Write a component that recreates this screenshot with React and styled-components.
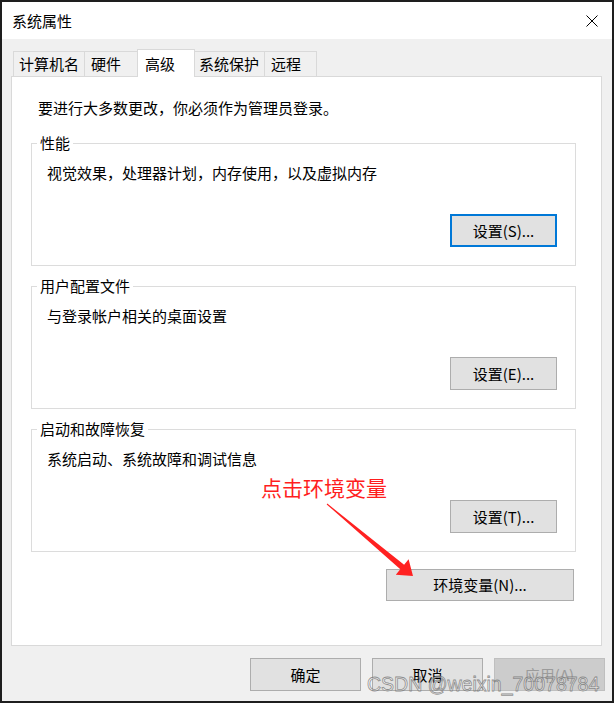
import styled, { createGlobalStyle } from "styled-components";

const GlobalStyle = createGlobalStyle`
  html, body {
    margin: 0;
    padding: 0;
    background: #ffffff;
  }
`;

const Window = styled.div`
  position: relative;
  width: 614px;
  height: 703px;
  box-sizing: border-box;
  border: 2px solid #1e1e1e;
  display: flex;
  flex-direction: column;
  background: #f0f0f0;
  font-family: "Noto Sans CJK SC", "Noto Sans", sans-serif;
  font-size: 15px;
  color: #000;
  overflow: hidden;
`;

const TitleBar = styled.div`
  height: 37px;
  flex: none;
  background: #ffffff;
  display: flex;
  align-items: center;
  justify-content: space-between;
  padding: 0 14px 0 10px;
  line-height: 20px;
`;

const Body = styled.div`
  flex: 1;
  display: flex;
  flex-direction: column;
  padding: 10px 8px 10px 9px;
`;

const TabStrip = styled.div`
  display: flex;
  align-items: flex-end;
  padding-left: 2px;
`;

const Tab = styled.div`
  position: relative;
  z-index: ${(p) => (p.$active ? 2 : 1)};
  box-sizing: border-box;
  width: ${(p) => p.$w}px;
  height: ${(p) => (p.$active ? 28 : 25)}px;
  margin-bottom: ${(p) => (p.$active ? -1 : 0)}px;
  margin-left: ${(p) => (p.$first ? 0 : -1)}px;
  padding-left: ${(p) => p.$pad}px;
  border: 1px solid #d9d9d9;
  border-bottom: none;
  background: ${(p) => (p.$active ? "#ffffff" : "#f0f0f0")};
  display: flex;
  align-items: center;
  line-height: 20px;
  white-space: nowrap;
`;

const Panel = styled.div`
  height: 570px;
  box-sizing: border-box;
  margin-right: 2px;
  border: 1px solid #d9d9d9;
  background: #ffffff;
  padding: 21px 25px 0 19px;
  display: flex;
  flex-direction: column;
`;

const Intro = styled.div`
  margin-left: 7px;
  line-height: 20px;
`;

const Group = styled.fieldset`
  margin: ${(p) => (p.$first ? 15 : 10)}px 0 0;
  border: 1px solid #dcdcdc;
  padding: 10px 18px 18px 5px;
  min-inline-size: 0;
`;

const Legend = styled.legend`
  padding: 0 3px;
  line-height: 20px;
  font-size: 15px;
`;

const Desc = styled.div`
  margin-left: 10px;
  line-height: 20px;
`;

const ButtonRow = styled.div`
  display: flex;
  justify-content: flex-end;
  margin-top: ${(p) => p.$top || 0}px;
  margin-right: ${(p) => p.$right || 0}px;
  gap: 11px;
`;

const Button = styled.button`
  box-sizing: border-box;
  width: ${(p) => p.$w || 107}px;
  height: ${(p) => p.$h || 33}px;
  padding: 0;
  background: ${(p) => (p.disabled ? "#cccccc" : "#e1e1e1")};
  border: ${(p) =>
    p.$focus ? "2px solid #0078d7" : p.disabled ? "1px solid #bfbfbf" : "1px solid #adadad"};
  color: ${(p) => (p.disabled ? "#9b9b9b" : "#000")};
  font-family: inherit;
  font-size: 15px;
  line-height: 20px;
`;

const Footer = styled(ButtonRow)`
  margin-top: 12px;
  margin-right: -1px;
`;

const Note = styled.div`
  position: absolute;
  left: 259px;
  top: 473px;
  color: #ff1e1e;
  font-size: 21px;
  line-height: 24px;
  white-space: nowrap;
`;

const Overlay = styled.svg`
  position: absolute;
  left: -2px;
  top: -2px;
  width: 614px;
  height: 703px;
  pointer-events: none;
`;

const Watermark = styled.div`
  position: absolute;
  left: 365px;
  top: 670px;
  font-family: "Liberation Sans", Arial, sans-serif;
  font-size: 19.5px;
  line-height: 24px;
  color: rgba(255, 255, 255, 0.5);
  -webkit-text-stroke: 0.8px rgba(105, 105, 105, 0.72);
  white-space: nowrap;
  pointer-events: none;
`;

const tabs = [
  { label: "计算机名", w: 72, pad: 5 },
  { label: "硬件", w: 54, pad: 6 },
  { label: "高级", w: 58, pad: 7, active: true },
  { label: "系统保护", w: 71, pad: 4 },
  { label: "远程", w: 53, pad: 6 },
];

const groups = [
  { title: "性能", desc: "视觉效果，处理器计划，内存使用，以及虚拟内存", btn: "设置(S)...", focus: true },
  { title: "用户配置文件", desc: "与登录帐户相关的桌面设置", btn: "设置(E)..." },
  { title: "启动和故障恢复", desc: "系统启动、系统故障和调试信息", btn: "设置(T)..." },
];

const CloseIcon = () => (
  <svg width="12" height="12" viewBox="0 0 12 12">
    <path d="M0.5 0.5 L11.5 11.5 M11.5 0.5 L0.5 11.5" stroke="#000" strokeWidth="1" fill="none" />
  </svg>
);

export default function App() {
  return (
    <>
      <GlobalStyle />
      <Window>
        <TitleBar>
          <span>系统属性</span>
          <CloseIcon />
        </TitleBar>
        <Body>
          <TabStrip>
            {tabs.map((t, i) => (
              <Tab key={t.label} $w={t.w} $pad={t.pad} $active={t.active} $first={i === 0}>
                {t.label}
              </Tab>
            ))}
          </TabStrip>
          <Panel>
            <Intro>要进行大多数更改，你必须作为管理员登录。</Intro>
            {groups.map((g, i) => (
              <Group key={g.title} $first={i === 0}>
                <Legend>{g.title}</Legend>
                <Desc>{g.desc}</Desc>
                <ButtonRow $top={31}>
                  <Button $focus={g.focus}>{g.btn}</Button>
                </ButtonRow>
              </Group>
            ))}
            <ButtonRow $top={17} $right={2}>
              <Button $w={188} $h={32}>环境变量(N)...</Button>
            </ButtonRow>
          </Panel>
          <Footer>
            <Button $w={111}>确定</Button>
            <Button $w={111}>取消</Button>
            <Button $w={111} disabled>应用(A)</Button>
          </Footer>
        </Body>

        <Note>点击环境变量</Note>
        <Overlay viewBox="0 0 614 703">
          <polygon
            points="326.7,504.4 327.3,503.6 404.1,564.7 408.6,559.3 413,576 395.8,574.7 400.3,569.3"
            fill="#ff2121"
          />
        </Overlay>
        <Watermark>CSDN @weixin_70078784</Watermark>
      </Window>
    </>
  );
}
